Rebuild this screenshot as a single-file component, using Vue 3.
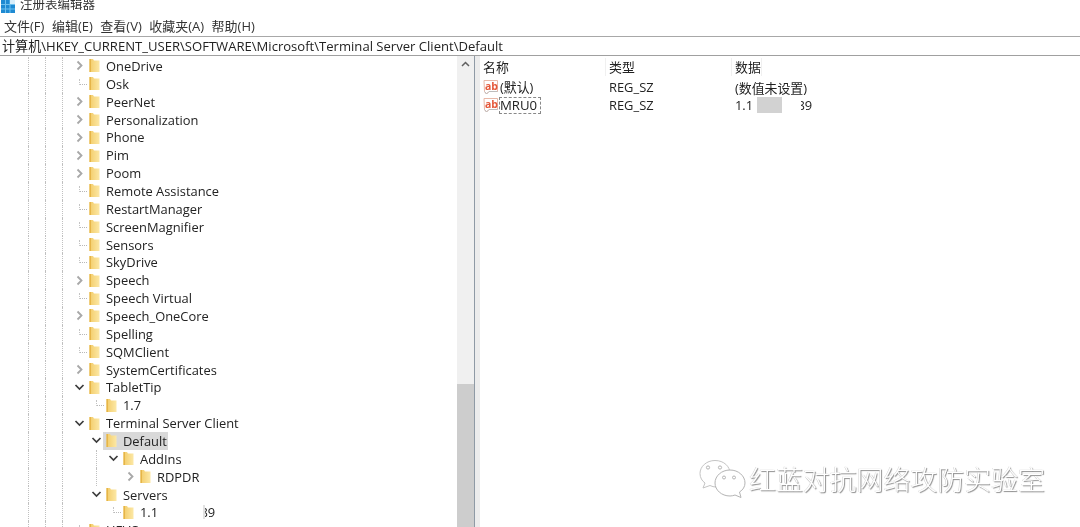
<script setup>
const menus = ['文件(F)', '编辑(E)', '查看(V)', '收藏夹(A)', '帮助(H)']

const closed = (name) => ({ name, depth: 0, state: 'closed' })
const leaf = (name) => ({ name, depth: 0, state: 'leaf' })

const rows = [
  closed('OneDrive'),
  leaf('Osk'),
  closed('PeerNet'),
  closed('Personalization'),
  closed('Phone'),
  closed('Pim'),
  closed('Poom'),
  leaf('Remote Assistance'),
  leaf('RestartManager'),
  leaf('ScreenMagnifier'),
  leaf('Sensors'),
  leaf('SkyDrive'),
  closed('Speech'),
  leaf('Speech Virtual'),
  closed('Speech_OneCore'),
  leaf('Spelling'),
  leaf('SQMClient'),
  closed('SystemCertificates'),
  { name: 'TabletTip', depth: 0, state: 'open' },
  { name: '1.7', depth: 1, state: 'leaf' },
  { name: 'Terminal Server Client', depth: 0, state: 'open' },
  { name: 'Default', depth: 1, state: 'open', selected: true },
  { name: 'AddIns', depth: 2, state: 'open', rails: [4] },
  { name: 'RDPDR', depth: 3, state: 'closed', rails: [4] },
  { name: 'Servers', depth: 1, state: 'open' },
  { name: '1.1', depth: 2, state: 'leaf', redacted: true },
  leaf('HEVC')
]

const values = [
  { name: '(默认)', type: 'REG_SZ', data: '(数值未设置)' },
  { name: 'MRU0', type: 'REG_SZ', data: '1.1', redacted: true, focused: true }
]

const cellCount = (row) => 3 + row.depth
const hasRail = (row, i) => i < 3 || (row.rails || []).includes(i)
</script>

<template>
  <div class="window">
    <div class="titlebar">
      <svg class="app-icon" width="17" height="17" viewBox="0 0 17 17">
        <rect x="1" y="0" width="14" height="13" fill="#1f8ad2" />
        <path d="M5.5 0 V13 M10 0 V13 M1 4.5 H15 M1 9 H15" stroke="#6fc0ee" stroke-width="1" />
        <path d="M10 0 H15 V4 H10 Z" fill="#d8eefa" />
      </svg>
      <span>注册表编辑器</span>
    </div>

    <div class="menubar">
      <span v-for="m in menus" :key="m">{{ m }}</span>
    </div>

    <div class="address">计算机\HKEY_CURRENT_USER\SOFTWARE\Microsoft\Terminal Server Client\Default</div>

    <div class="panes">
      <div class="tree">
        <div v-for="row in rows" :key="row.name" class="row">
          <span v-for="(_, i) in cellCount(row)" :key="i" class="cell" :class="{ rail: hasRail(row, i) }"></span>
          <span class="cell twist">
            <svg v-if="row.state === 'closed'" width="9" height="11" viewBox="0 0 9 11">
              <path d="M2.5 1.5 L6.5 5.5 L2.5 9.5" fill="none" stroke="#a8a8a8" stroke-width="1.8" />
            </svg>
            <svg v-else-if="row.state === 'open'" width="11" height="9" viewBox="0 0 11 9">
              <path d="M1.5 2 L5.5 6 L9.5 2" fill="none" stroke="#3c3c3c" stroke-width="1.7" />
            </svg>
            <i v-else class="elbow"></i>
          </span>
          <span class="entry" :class="{ selected: row.selected }">
            <svg class="folder" width="11" height="15" viewBox="0 0 11 15">
              <defs>
                <linearGradient id="fold" x1="0" y1="0" x2="1" y2="0">
                  <stop offset="0" stop-color="#f3cc68" />
                  <stop offset="1" stop-color="#fce8a6" />
                </linearGradient>
              </defs>
              <path d="M0.5 1 H4 L5 2.5 H10.5 V14 H0.5 Z" fill="url(#fold)" />
              <path d="M0.5 1 H2 V14 H0.5 Z" fill="#e6b548" />
            </svg>
            <span class="label">{{ row.name }}</span>
            <span v-if="row.redacted" class="tree-redact"><i></i><b>89</b></span>
          </span>
        </div>
      </div>

      <div class="scrollbar">
        <svg class="up" width="17" height="17" viewBox="0 0 17 17">
          <path d="M5 10 L8.5 6.5 L12 10" fill="none" stroke="#606060" stroke-width="1.5" />
        </svg>
        <div class="thumb"></div>
      </div>

      <div class="splitter"></div>

      <div class="list">
        <div class="list-row list-head">
          <span class="col name">名称</span>
          <span class="col type">类型</span>
          <span class="col">数据</span>
        </div>
        <div v-for="v in values" :key="v.name" class="list-row">
          <span class="col name">
            <svg class="reg" width="16" height="17" viewBox="0 0 16 17">
              <path d="M1 1.5 H14.5 V12.5 H6 L3.5 15 L1.5 12.5 Z" fill="#fff" stroke="#e8b8a8" />
              <path d="M1.5 12.5 L3.5 15 L6 12.5 H14.5" fill="none" stroke="#bdbdbd" />
              <text x="2" y="10.5" class="ab">ab</text>
            </svg>
            <span class="val-name" :class="{ focused: v.focused }">{{ v.name }}</span>
          </span>
          <span class="col type">{{ v.type }}</span>
          <span class="col data">
            {{ v.data }}
            <template v-if="v.redacted"><i class="smudge"></i><b class="tail">89</b></template>
          </span>
        </div>
      </div>
    </div>

    <div class="watermark">
      <svg width="47" height="38" viewBox="0 0 47 38">
        <path d="M16 0.5 C7.5 0.5 1 6.5 1 13.5 C1 17.5 3 21 6 23 L4 28 L11 25.5 C13 26.5 15 27 17 27 C26 27 31 20 31 13.5 C31 6.5 25 0.5 16 0.5 Z" fill="#fff" stroke="#c4c4c4" />
        <path d="M31 10 C22.5 10 16 16 16 23 C16 30 22.5 36 31 36 C33 36 34.5 35.5 36 35 L42 37.5 L40.5 32 C44 30 46 26.5 46 23 C46 16 39.5 10 31 10 Z" fill="#fff" stroke="#b4b4b4" />
        <circle cx="9" cy="7.5" r="1.6" fill="#fff" stroke="#b4b4b4" />
        <circle cx="21" cy="7.5" r="1.6" fill="#fff" stroke="#b4b4b4" />
        <circle cx="25" cy="17.5" r="1.5" fill="#fff" stroke="#b4b4b4" />
        <circle cx="35" cy="17.5" r="1.5" fill="#fff" stroke="#b4b4b4" />
      </svg>
      <span class="wm-text">红蓝对抗网络攻防实验室</span>
    </div>
  </div>
</template>

<style>
html,
body {
  margin: 0;
  background: #fff;
}
</style>

<style scoped>
.window {
  position: relative;
  width: 1080px;
  height: 527px;
  overflow: hidden;
  display: flex;
  flex-direction: column;
  background: #fff;
  color: #222;
  font-family: "Open Sans", "Noto Sans CJK SC", sans-serif;
  font-size: 12.9px;
  filter: blur(0.35px);
}

.titlebar {
  height: 14px;
  flex: none;
  display: flex;
  align-items: flex-end;
  gap: 3px;
  overflow: hidden;
  font-size: 12.5px;
  line-height: 18px;
  color: #333;
}

.titlebar span {
  height: 18px;
}

.app-icon {
  flex: none;
  margin-bottom: -3px;
}

.menubar {
  height: 22px;
  flex: none;
  display: flex;
  align-items: center;
  gap: 7.5px;
  padding-left: 4px;
  font-size: 13px;
  color: #333;
}

.address {
  height: 18px;
  flex: none;
  line-height: 18px;
  padding-left: 2px;
  border-top: 1px solid #a8a8a8;
  border-bottom: 1px solid #a0a0a0;
  font-size: 13.08px;
  white-space: nowrap;
}

.panes {
  flex: 1;
  min-height: 0;
  display: flex;
}

.tree {
  width: 457px;
  flex: none;
  padding-left: 20px;
  box-sizing: border-box;
  padding-top: 1px;
  overflow: hidden;
}

.row {
  height: 17.86px;
  display: flex;
  align-items: stretch;
  white-space: nowrap;
}

.cell {
  width: 17px;
  flex: none;
  position: relative;
  display: flex;
  align-items: center;
  justify-content: center;
}

.rail::after {
  content: '';
  height: 100%;
  border-left: 1px dotted #c0c0c0;
}

.twist {
  margin-right: 1px;
}

.elbow {
  position: absolute;
  left: 8px;
  top: 4px;
  width: 7px;
  height: 5px;
  border-left: 1px dotted #c4c4c4;
  border-bottom: 1px dotted #b8b8b8;
}

.entry {
  display: flex;
  align-items: center;
  margin-left: -3px;
  padding-left: 3px;
  padding-right: 1px;
  flex: none;
}

.entry.selected {
  background: #d9d9d9;
}

.folder {
  flex: none;
  margin-right: 6px;
}

.tree-redact {
  display: flex;
  align-items: center;
  margin-left: 2px;
  height: 100%;
}

.tree-redact i {
  width: 43px;
  height: 14px;
  background: #fff;
  border-right: 2px solid #e2e2e2;
}

.tree-redact b {
  width: 10px;
  overflow: hidden;
  font-weight: 400;
  direction: rtl;
}

.scrollbar {
  width: 17px;
  flex: none;
  display: flex;
  flex-direction: column;
  background: #f0f0f0;
}

.up {
  flex: none;
}

.thumb {
  margin-top: auto;
  height: 143px;
  background: #cdcdcd;
}

.splitter {
  width: 6px;
  flex: none;
  box-sizing: border-box;
  border-left: 1px solid #8f9aa5;
  background: #ececec;
}

.list {
  flex: 1;
  padding-top: 2px;
}

.list-row {
  height: 18px;
  display: flex;
  align-items: center;
  white-space: nowrap;
}

.list-head {
  margin-bottom: 2px;
}

.list-head .col {
  padding-left: 3px;
  box-sizing: border-box;
  height: 18px;
  line-height: 18px;
  border-right: 1px solid #f0f0f0;
}

.col {
  flex: none;
}

.col.name {
  width: 126px;
  display: flex;
  align-items: center;
  box-sizing: border-box;
  padding-left: 3px;
}

.col.type {
  width: 126px;
  padding-left: 3px;
  box-sizing: border-box;
}

.col.data {
  padding-left: 3px;
  display: flex;
  align-items: center;
}

.reg {
  flex: none;
}

.ab {
  font-family: "Open Sans", sans-serif;
  font-size: 10.5px;
  font-weight: 700;
  fill: #e5583a;
}

.val-name {
  padding-right: 1px;
  border: 1px dashed transparent;
  height: 15px;
  line-height: 15px;
}

.val-name.focused {
  border-color: #888;
  padding-right: 3px;
  font-size: 13.2px;
}

.smudge {
  width: 25px;
  height: 16px;
  margin-left: 4px;
  background: #d2d2d2;
}

.tail {
  margin-left: 19px;
  width: 11px;
  overflow: hidden;
  font-weight: 400;
  direction: rtl;
}

.watermark {
  position: absolute;
  left: 699px;
  top: 460px;
  display: flex;
  align-items: center;
  gap: 3px;
}

.wm-text {
  font-family: "Noto Sans CJK SC", sans-serif;
  font-size: 26.9px;
  font-weight: 300;
  line-height: 38px;
  color: #fff;
  text-shadow: 1px 1px 1px #8a8a8a, -0.5px -0.5px 0.5px #cfcfcf;
}
</style>
